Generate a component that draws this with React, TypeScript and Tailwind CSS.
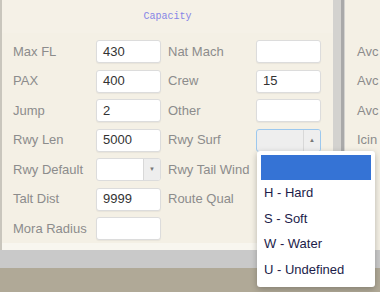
import React from "react";

const font = { fontFamily: '"Liberation Sans", Arial, sans-serif' };

const TextBox = ({ value }: { value?: string }) => (
  <div className="w-[65px] h-[23px] bg-white border border-[#dcdcdc] rounded-[3px] flex items-center pl-[6px] text-[13px] text-[#333] shadow-[0_1px_1px_rgba(0,0,0,0.05)]">
    {value}
  </div>
);

const SelectBox = ({ open }: { open?: boolean }) => (
  <div
    className={
      "w-[65px] h-[23px] rounded-[3px] flex overflow-hidden " +
      (open ? "border border-[#9cc8ee] bg-[#eeeeee]" : "border border-[#dcdcdc] bg-white")
    }
  >
    <div className="flex-1" />
    <div className="w-[17px] border-l border-[#d8d8d8] bg-[#eeeeee] flex items-center justify-center text-[6px] text-[#777]">
      {open ? "▲" : "▼"}
    </div>
  </div>
);

type Cell = { label: string; kind: "text" | "select" | "selectOpen" | "none"; value?: string };

const rows: [Cell, Cell | null][] = [
  [{ label: "Max FL", kind: "text", value: "430" }, { label: "Nat Mach", kind: "text" }],
  [{ label: "PAX", kind: "text", value: "400" }, { label: "Crew", kind: "text", value: "15" }],
  [{ label: "Jump", kind: "text", value: "2" }, { label: "Other", kind: "text" }],
  [{ label: "Rwy Len", kind: "text", value: "5000" }, { label: "Rwy Surf", kind: "selectOpen" }],
  [{ label: "Rwy Default", kind: "select" }, { label: "Rwy Tail Wind", kind: "none" }],
  [{ label: "Talt Dist", kind: "text", value: "9999" }, { label: "Route Qual", kind: "none" }],
  [{ label: "Mora Radius", kind: "text" }, null],
];

const Field = ({ cell, wide }: { cell: Cell; wide?: boolean }) => (
  <>
    <div className={(wide ? "w-[88px]" : "w-[83px]") + " text-[13px] text-[#8c8c8c] whitespace-nowrap"}>{cell.label}</div>
    <div className="w-[65px]">
      {cell.kind === "text" && <TextBox value={cell.value} />}
      {cell.kind === "select" && <SelectBox />}
      {cell.kind === "selectOpen" && <SelectBox open />}
    </div>
  </>
);

const options = ["H - Hard", "S - Soft", "W - Water", "U - Undefined"];

export default function App() {
  return (
    <div className="relative w-[380px] h-[292px] overflow-hidden bg-[#f4f0e5]" style={font}>
      <div className="flex h-[250px]">
        {/* left panel */}
        <div className="w-[333px] border-l-2 border-[#c9c6bd] flex flex-col">
          <div
            className="h-[33px] flex items-center justify-center text-[10px] text-[#8585e6] bg-[#f5f1e7]"
            style={{ fontFamily: '"Liberation Mono", "Courier New", monospace' }}
          >
            Capacity
          </div>
          <div className="flex-1 flex flex-col gap-[6.5px] pt-[7px] pl-[11px] border-b-[7px] border-[#f8f6ef]">
            {rows.map(([a, b], i) => (
              <div key={i} className="flex items-center h-[23px]">
                <Field cell={a} />
                <div className="w-[7px]" />
                {b && <Field cell={b} wide />}
              </div>
            ))}
          </div>
        </div>
        {/* splitter */}
        <div className="w-[12px] flex bg-[#d3d2cf]">
          <div className="w-[8px]" />
          <div className="w-[3px] bg-[#a9a9a9]" />
        </div>
        {/* right panel */}
        <div className="flex-1 flex flex-col gap-[6.5px] pt-[40px] pl-[12px] text-[13px] text-[#8c8c8c]">
          {["Avc", "Avc", "Avc", "Icin", ""].map((t, i) => (
            <div key={i} className="h-[23px] flex items-center whitespace-nowrap">{t}</div>
          ))}
        </div>
      </div>
      <div className="h-[18px] bg-[#c9c9c9]" />
      <div className="h-[24px] bg-[#b0a997]" />

      {/* open dropdown */}
      <div className="absolute left-[257px] top-[151px] w-[118px] h-[136px] bg-white rounded-[3px] shadow-[0_2px_6px_rgba(0,0,0,0.25)] px-[4px] pt-[4px] flex flex-col">
        <div className="h-[25px] bg-[#3573d5]" />
        {options.map((o) => (
          <div key={o} className="h-[25.5px] flex items-center pl-[3px] text-[13px] text-[#1c1c4a]">
            {o}
          </div>
        ))}
      </div>
    </div>
  );
}
